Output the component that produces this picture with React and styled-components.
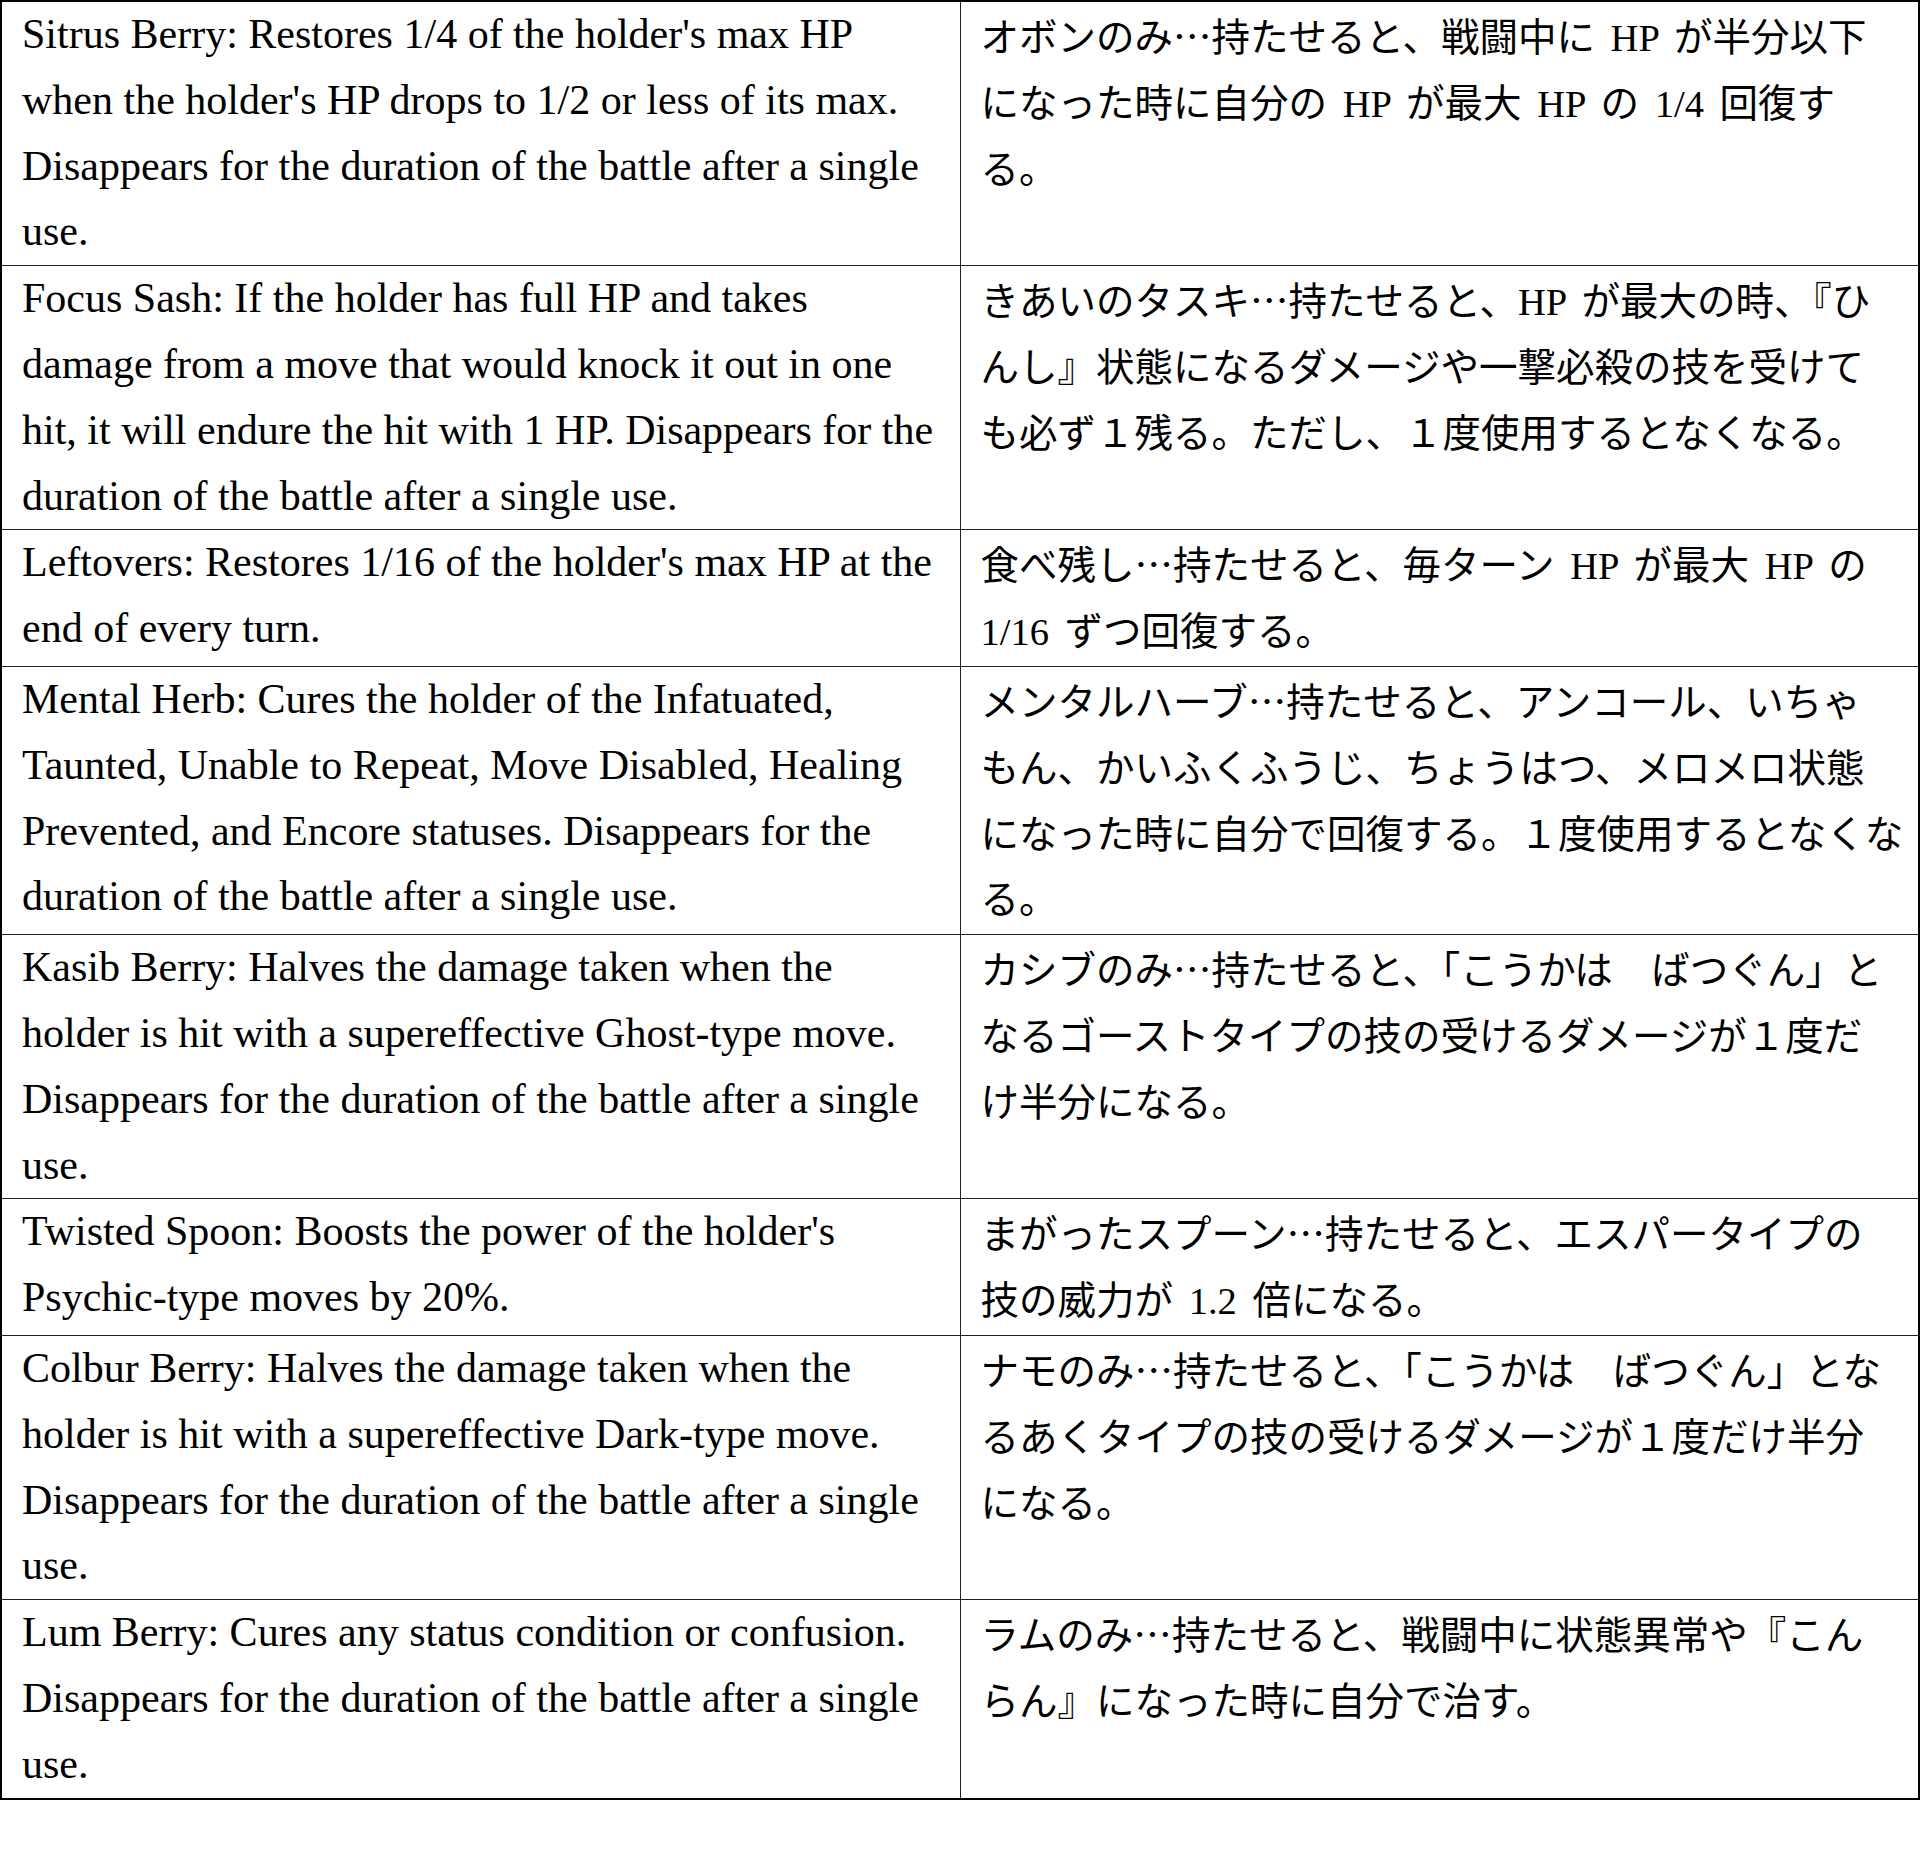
import React from 'react';
import styled, { createGlobalStyle } from 'styled-components';

const GlobalStyle = createGlobalStyle`
  html, body {
    margin: 0;
    padding: 0;
    background: #fff;
  }
`;

const Table = styled.table`
  width: 100%;
  border-collapse: collapse;
  table-layout: fixed;
  border: 2px solid #000;
  font-family: "Liberation Serif", "Noto Sans CJK JP", serif;
  line-height: 65.8px;
  color: #000;
`;

const Cell = styled.td`
  width: 50%;
  vertical-align: top;
  border: 1px solid #222;
  padding: 0 20px;
  font-size: 42px;
`;

// Japanese column keeps the line breaks of the printed source
const JaCell = styled(Cell)`
  font-size: 38.5px;
  word-spacing: 6px;
  white-space: pre;
`;

const Dots = styled.span`
  font-family: "Noto Sans CJK JP", sans-serif;
`;

const rows = [
  {
    en: "Sitrus Berry: Restores 1/4 of the holder's max HP when the holder's HP drops to 1/2 or less of its max. Disappears for the duration of the battle after a single use.",
    ja: ['オボンのみ…持たせると、戦闘中に HP が半分以下', 'になった時に自分の HP が最大 HP の 1/4 回復す', 'る。'],
  },
  {
    en: 'Focus Sash: If the holder has full HP and takes damage from a move that would knock it out in one hit, it will endure the hit with 1 HP. Disappears for the duration of the battle after a single use.',
    ja: ['きあいのタスキ…持たせると、HP が最大の時、『ひ', 'んし』状態になるダメージや一撃必殺の技を受けて', 'も必ず１残る。ただし、１度使用するとなくなる。'],
  },
  {
    en: "Leftovers: Restores 1/16 of the holder's max HP at the end of every turn.",
    ja: ['食べ残し…持たせると、毎ターン HP が最大 HP の', '1/16 ずつ回復する。'],
  },
  {
    en: 'Mental Herb: Cures the holder of the Infatuated, Taunted, Unable to Repeat, Move Disabled, Healing Prevented, and Encore statuses. Disappears for the duration of the battle after a single use.',
    ja: ['メンタルハーブ…持たせると、アンコール、いちゃ', 'もん、かいふくふうじ、ちょうはつ、メロメロ状態', 'になった時に自分で回復する。１度使用するとなくな', 'る。'],
  },
  {
    en: 'Kasib Berry: Halves the damage taken when the holder is hit with a supereffective Ghost-type move. Disappears for the duration of the battle after a single use.',
    ja: ['カシブのみ…持たせると、「こうかは　ばつぐん」と', 'なるゴーストタイプの技の受けるダメージが１度だ', 'け半分になる。'],
  },
  {
    en: "Twisted Spoon: Boosts the power of the holder's Psychic-type moves by 20%.",
    ja: ['まがったスプーン…持たせると、エスパータイプの', '技の威力が 1.2 倍になる。'],
  },
  {
    en: 'Colbur Berry: Halves the damage taken when the holder is hit with a supereffective Dark-type move. Disappears for the duration of the battle after a single use.',
    ja: ['ナモのみ…持たせると、「こうかは　ばつぐん」とな', 'るあくタイプの技の受けるダメージが１度だけ半分', 'になる。'],
  },
  {
    en: 'Lum Berry: Cures any status condition or confusion. Disappears for the duration of the battle after a single use.',
    ja: ['ラムのみ…持たせると、戦闘中に状態異常や『こん', 'らん』になった時に自分で治す。'],
  },
];

function JaText({ lines }) {
  const [name, rest] = lines.join('\n').split('…');
  return (
    <>
      {name}
      <Dots>…</Dots>
      {rest}
    </>
  );
}

export default function App() {
  return (
    <>
      <GlobalStyle />
      <Table>
        <tbody>
          {rows.map((row, i) => (
            <tr key={i}>
              <Cell>{row.en}</Cell>
              <JaCell lang="ja">
                <JaText lines={row.ja} />
              </JaCell>
            </tr>
          ))}
        </tbody>
      </Table>
    </>
  );
}
